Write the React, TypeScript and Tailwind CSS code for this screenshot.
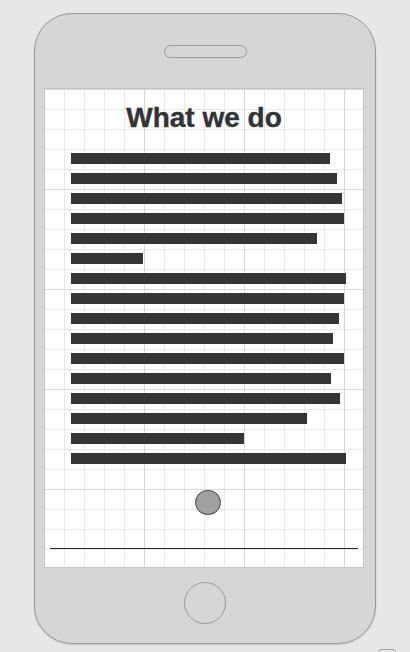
import React from 'react';

const bars = [259, 266, 271, 273, 246, 72, 275, 273, 268, 262, 273, 260, 269, 236, 173, 275];

export default function App() {
  return (
    <div className="relative w-[410px] h-[652px] overflow-hidden bg-[#e8e8e8] pt-[13px] pl-[34px]" style={{ fontFamily: '"Liberation Sans", Arial, sans-serif' }}>
      {/* Phone body */}
      <div className="w-[342px] h-[631px] rounded-[38px] border border-[#9a9a9a] bg-[#d6d6d6] flex flex-col items-center shadow-[0_1px_2px_rgba(0,0,0,0.15)]">
        {/* speaker */}
        <div className="mt-[31px] w-[83px] h-[13px] rounded-full border border-[#9a9a9a]" />

        {/* Screen */}
        <div className="mt-[30px] self-start ml-[9px] w-[320px] h-[480px] border border-[#c4c4c4] bg-white bg-[image:linear-gradient(to_right,#d6d6d6_1px,transparent_1px),linear-gradient(to_bottom,#d6d6d6_1px,transparent_1px),linear-gradient(to_right,#e8e8e8_1px,transparent_1px),linear-gradient(to_bottom,#e8e8e8_1px,transparent_1px)] bg-[size:100px_100px,100px_100px,20px_20px,20px_20px] bg-[position:-1px_0,-1px_0,-1px_0,-1px_0] flex flex-col">
          <h1 className="mt-[13px] text-center text-[28px] leading-[32px] font-bold text-[#333] [-webkit-text-stroke:0.4px_#333]">What we do</h1>

          <div className="mt-[19px] pl-[26px] flex flex-col gap-[9px]">
            {bars.map((w, i) => (
              <div key={i} className="h-[11px] bg-[#353535]" style={{ width: w }} />
            ))}
          </div>

          <div className="mt-[26px] ml-[150px] w-[26px] h-[25px] rounded-full border border-[#444] bg-[#a0a0a0]" />

          <div className="mt-[33px] ml-[5px] w-[308px] h-px bg-[#2a2a2a]" />
        </div>

        {/* home button */}
        <div className="mt-[14px] w-[42px] h-[42px] rounded-full border border-[#9a9a9a]" />
      </div>

      {/* resize handle peeking at bottom */}
      <div className="absolute left-[378px] top-[649px] w-[18px] h-[10px] rounded-[3px] border border-[#a0a0a0]" />
    </div>
  );
}
